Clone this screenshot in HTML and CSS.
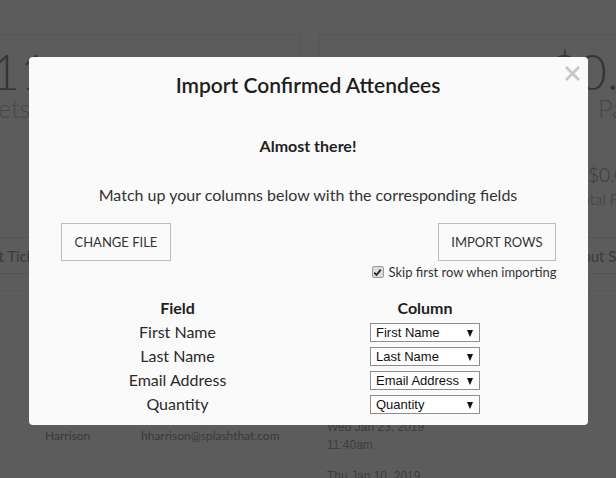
FILE: index.html
```html
<!DOCTYPE html>
<html>
<head>
<meta charset="utf-8">
<link rel="stylesheet" href="styles.css">
</head>
<body>
<div class="page">
  <div class="topbar"></div>
  <div class="cards">
    <div class="card card-left">
      <div class="big big-left">11</div>
      <div class="big-label label-left">Tickets</div>
    </div>
    <div class="card card-right">
      <div class="big big-right">$0.00</div>
      <div class="big-label label-right">Paid</div>
      <div class="small-num">$0.00</div>
      <div class="small-label">Total Fees</div>
    </div>
  </div>
  <div class="actions">
    <span class="act act-left">Export Tickets</span>
    <span class="act act-right">About Seating</span>
  </div>
  <div class="thead"></div>
  <div class="trow">
    <span class="c-last">Harrison</span>
    <span class="c-email">hharrison@splashthat.com</span>
    <span class="c-date">Wed Jan 23, 2019<br>11:40am</span>
  </div>
  <div class="trow2">
    <span class="c-date">Thu Jan 10, 2019</span>
  </div>

  <div class="overlay">
    <div class="modal">
      <svg class="close" width="17" height="17" viewBox="0 0 17 17"><path d="M2 2 L15 15 M15 2 L2 15" stroke="#c6c6c6" stroke-width="2.6" fill="none"/></svg>
      <h1 class="title">Import Confirmed Attendees</h1>
      <p class="almost">Almost there!</p>
      <p class="match">Match up your columns below with the corresponding fields</p>
      <div class="btn-row">
        <button class="btn">CHANGE FILE</button>
        <button class="btn btn-import">IMPORT ROWS</button>
      </div>
      <label class="skip"><span class="chk"><svg width="9" height="9" viewBox="0 0 9 9"><path d="M1.2 4.6 L3.5 7 L7.8 1.6" stroke="#222" stroke-width="1.8" fill="none"/></svg></span>Skip first row when importing</label>
      <div class="map">
        <div class="map-h">Field</div>
        <div class="map-h">Column</div>
        <div class="fld">First Name</div>
        <div class="sel"><span class="sel-box">First Name</span></div>
        <div class="fld">Last Name</div>
        <div class="sel"><span class="sel-box">Last Name</span></div>
        <div class="fld">Email Address</div>
        <div class="sel"><span class="sel-box">Email Address</span></div>
        <div class="fld">Quantity</div>
        <div class="sel"><span class="sel-box">Quantity</span></div>
      </div>
    </div>
  </div>
</div>
</body>
</html>
```
FILE: styles.css
```css
html, body {
  margin: 0;
  padding: 0;
}
body {
  background: #5c5c5c;
  font-family: Lato, "Noto Sans", sans-serif;
  width: 616px;
  height: 478px;
  overflow: hidden;
}
.page {
  position: relative;
  width: 616px;
  height: 478px;
  overflow: hidden;
}
.topbar {
  height: 12px;
  border-bottom: 1px solid #585858;
}
.cards {
  display: flex;
  gap: 18px;
  margin-top: 21px;
  height: 203px;
}
.card {
  border-top: 1px solid #575757;
  border-right: 1px solid #575757;
  border-left: 1px solid #575757;
  position: relative;
  flex-shrink: 0;
}
.card-left {
  width: 300px;
  margin-left: -1px;
}
.card-right {
  width: 320px;
}
.big {
  font-weight: 300;
  font-size: 50px;
  line-height: 52px;
  margin-top: 10px;
  color: #363636;
  white-space: nowrap;
}
.big-label {
  font-weight: 300;
  font-size: 25px;
  line-height: 22px;
  color: #474747;
  white-space: nowrap;
}
.big-left { margin-left: -9px; }
.label-left { margin-left: -45px; }
.big-right { margin-left: 229px; }
.label-right { margin-left: 278px; }
.small-num {
  margin-top: 46px;
  margin-left: 268px;
  font-size: 19px;
  line-height: 20px;
  font-weight: 300;
  color: #3a3a3a;
  white-space: nowrap;
}
.small-label {
  margin-top: 5px;
  margin-left: 254px;
  font-size: 15px;
  line-height: 18px;
  color: #4a4a4a;
  white-space: nowrap;
}
.actions {
  display: flex;
  justify-content: space-between;
  height: 35px;
  border-top: 1px solid #545454;
  border-bottom: 1px solid #545454;
  align-items: center;
  font-size: 15px;
  color: #3a3a3a;
  white-space: nowrap;
  overflow: hidden;
}
.act-left { margin-left: -40px; }
.act-right { margin-right: -41px; }
.thead {
  height: 16px;
  border-bottom: 1px solid #585858;
}
.trow {
  display: flex;
  padding-top: 127px;
  font-size: 12px;
  color: #3a3a3a;
  line-height: 18px;
}
.c-last { margin-left: 45px; width: 96px; padding-top: 9px; }
.c-email { width: 186px; padding-top: 9px; }
.c-date { font-family: "Liberation Sans", Arial, sans-serif; font-size: 12px; color: #3c3c3c; }
.trow2 {
  padding-top: 11px;
  padding-left: 327px;
  line-height: 18px;
}

.overlay {
  position: absolute;
  inset: 0;
  display: flex;
  justify-content: center;
  align-items: flex-start;
  padding-top: 57px;
}
.modal {
  position: relative;
  width: 495px;
  padding: 16px 32px 9px;
  background: #fafafa;
  border-radius: 4px;
  color: #222;
  text-align: center;
}
.close {
  position: absolute;
  top: 8px;
  right: 7px;
}
.title {
  margin: 0;
  font-size: 21px;
  line-height: 24px;
  font-weight: 600;
  color: #1e1e1e;
}
.almost {
  margin: 39px 0 0;
  font-size: 16px;
  line-height: 20px;
  font-weight: 700;
  color: #222;
}
.match {
  margin: 29px 0 0;
  font-size: 16px;
  line-height: 20px;
  color: #333;
}
.btn-row {
  display: flex;
  justify-content: space-between;
  margin-top: 18px;
}
.btn {
  height: 38px;
  padding: 0 13px;
  background: #fafafa;
  border: 1px solid #bdbdbd;
  font-family: Lato, "Noto Sans", sans-serif;
  font-size: 13px;
  color: #333;
  border-radius: 0;
}
.btn-import {
  padding: 0 12px;
}
.skip {
  display: flex;
  justify-content: flex-end;
  align-items: center;
  margin-top: 3px;
  margin-right: -1px;
  font-size: 13px;
  line-height: 16px;
  color: #333;
}
.chk {
  display: inline-flex;
  align-items: center;
  justify-content: center;
  width: 10px;
  height: 10px;
  border: 1px solid #9a9a9a;
  border-radius: 2px;
  background: #dcdcdc;
  margin-right: 5px;
}
.map {
  display: grid;
  grid-template-columns: 234px 1fr;
  grid-auto-rows: 24px;
  margin-top: 16px;
}
.map-h {
  font-size: 16px;
  font-weight: 700;
  line-height: 22px;
  padding-top: 1px;
  color: #1e1e1e;
}
.fld {
  font-size: 16px;
  line-height: 24px;
  color: #2a2a2a;
}
.sel {
  display: flex;
  justify-content: center;
  align-items: center;
}
.sel-box {
  position: relative;
  box-sizing: border-box;
  width: 110px;
  height: 19px;
  border: 1px solid #8f8f8f;
  background: #fff;
  font-family: "Liberation Sans", Arial, sans-serif;
  font-size: 13px;
  line-height: 17px;
  text-align: left;
  padding-left: 5px;
  color: #111;
}
.sel-box::after {
  content: "";
  position: absolute;
  right: 6px;
  top: 6px;
  border-left: 3.5px solid transparent;
  border-right: 3.5px solid transparent;
  border-top: 7px solid #111;
}
```
